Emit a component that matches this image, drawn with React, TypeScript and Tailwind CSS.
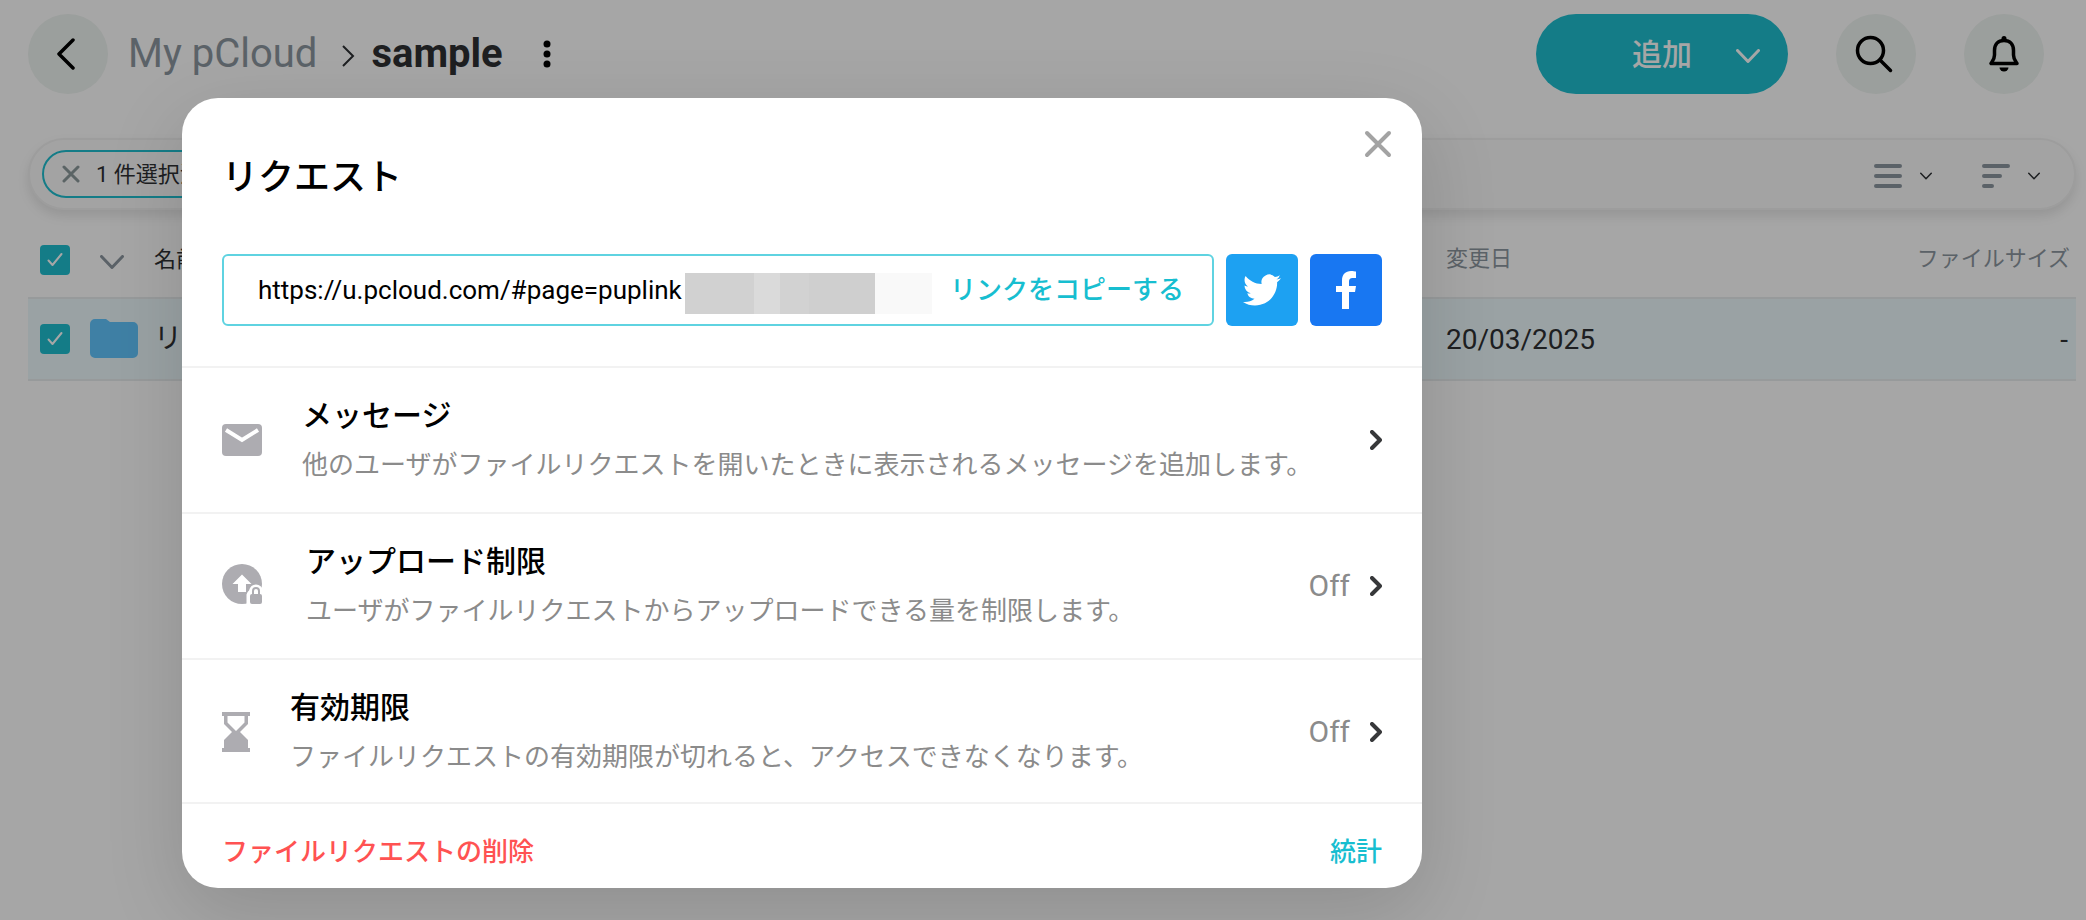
import type { ReactNode } from 'react';

function Checkbox({ label }: { label: string }) {
  return (
    <span className="relative block h-[30px] w-[30px] shrink-0">
      <input
        type="checkbox"
        defaultChecked
        aria-label={label}
        className="block h-[30px] w-[30px] appearance-none rounded bg-[#1fbfd0]"
      />
      <svg className="pointer-events-none absolute inset-0" width="30" height="30" viewBox="0 0 30 30" fill="none" stroke="#fff" strokeWidth="2">
        <path d="M8.5 15.5l4 4.500L21.500 9" strokeLinecap="round" strokeLinejoin="round" />
      </svg>
    </span>
  );
}

function ChevronDown({ className, width = 2 }: { className: string; width?: number }) {
  return (
    <svg className={className} viewBox="0 0 24 14" fill="none" stroke="currentColor" strokeWidth={width} strokeLinecap="round" strokeLinejoin="round">
      <path d="M1.500 1.500L12 12.500L22.500 1.500" />
    </svg>
  );
}

function MailIcon() {
  return (
    <svg width="40" height="32" viewBox="0 0 40 32">
      <rect width="40" height="32" rx="4" fill="#adacb1" />
      <path d="M4 6l16 10L36 6" fill="none" stroke="#fff" strokeWidth="4" />
    </svg>
  );
}

function UploadLimitIcon() {
  return (
    <svg width="44" height="44" viewBox="0 0 44 44">
      <circle cx="20" cy="20" r="20" fill="#adacb1" />
      <path d="M20 10.500L29.500 20H24v8h-8v-8h-5.500z" fill="#fff" />
      <path d="M24.500 42V30.500q1-3 2.500-4 1.500-6 7-6t7.500 6.500V42z" fill="#fff" />
      <rect x="28" y="30" width="12" height="10" rx="2" fill="#adacb1" />
      <path d="M31 31v-4a3 3 0 0 1 6 0v4" fill="none" stroke="#adacb1" strokeWidth="2" />
    </svg>
  );
}

function HourglassIcon() {
  return (
    <svg width="28" height="40" viewBox="0 0 28 40" fill="#adacb1">
      <path d="M0 0h28v4h-2v8l-8 8 8 8v8h2v4H0v-4h2v-8l8-8-8-8V4H0zM5.500 4v6.500L14 19l8.500-8.500V4z" fillRule="evenodd" />
    </svg>
  );
}

interface SettingRowProps {
  icon: ReactNode;
  title: string;
  text: string;
  value?: string;
}

function SettingRow({ icon, title, text, value }: SettingRowProps) {
  return (
    <button type="button" className="flex w-full items-center border-t-2 border-[#f2f2f2] px-10 py-6 text-left last:pb-[22px]">
      <span className="shrink-0">{icon}</span>
      <span className="ml-10 min-w-0 flex-1">
        <span className="block text-[30px] leading-[48px] font-medium text-black">{title}</span>
        <span className="block pt-0.5 text-[26px] leading-[46px] text-[#8b8b8b]">{text}</span>
      </span>
      {value && <span className="mr-5 text-[30px] leading-9 text-[#8b8b8b]">{value}</span>}
      <svg width="12" height="20" viewBox="0 0 12 20" fill="none" stroke="#37383a" strokeWidth="4" strokeLinecap="round" strokeLinejoin="round">
        <path d="M2 2l8 8-8 8" />
      </svg>
    </button>
  );
}

function TopBar() {
  return (
    <header className="flex items-center pt-3.5 pr-[42px] pl-7">
      <button type="button" aria-label="戻る" className="flex h-20 w-20 items-center justify-center rounded-full bg-[#eff4f1]">
        <svg className="mr-1" width="18" height="32" viewBox="0 0 18 32" fill="none" stroke="#000" strokeWidth="3.500" strokeLinecap="round" strokeLinejoin="round">
          <path d="M16 2L2 16l14 14" />
        </svg>
      </button>
      <nav className="ml-5 flex items-center text-[40px] leading-[48px]">
        <a href="#root" className="text-[#8d97a0]">My pCloud</a>
        <svg className="mt-1 mr-4 ml-6" width="14" height="22" viewBox="0 0 14 22" fill="none" stroke="#2e3134" strokeWidth="2">
          <path d="M2 1l10 10L2 21" />
        </svg>
        <a href="#sample" className="font-bold text-[#2e3134]">sample</a>
      </nav>
      <button type="button" aria-label="メニュー" className="ml-10">
        <svg width="8" height="28" viewBox="0 0 8 28">
          <circle cx="4" cy="4" r="3.500" />
          <circle cx="4" cy="14" r="3.500" />
          <circle cx="4" cy="24" r="3.500" />
        </svg>
      </button>
      <div className="ml-auto flex gap-12">
        <button type="button" className="flex h-20 w-[252px] items-center justify-end gap-11 rounded-full bg-[#1fbfd0] pr-7 text-[30px] font-medium text-white">
          追加
          <ChevronDown className="mt-1 h-3.5 w-6" width={3} />
        </button>
        <button type="button" aria-label="検索" className="flex h-20 w-20 items-center justify-center rounded-full bg-[#eff4f1]">
          <svg className="mr-1" width="38" height="38" viewBox="0 0 38 38" fill="none" stroke="#000" strokeWidth="3.500" strokeLinecap="round">
            <circle cx="15.500" cy="15.500" r="13" />
            <path d="M25 25L35.500 35.500" />
          </svg>
        </button>
        <button type="button" aria-label="通知" className="flex h-20 w-20 items-center justify-center rounded-full bg-[#eff4f1]">
          <svg width="32" height="36" viewBox="0 0 32 36" fill="none" stroke="#000" strokeWidth="3.500" strokeLinejoin="round">
            <path d="M16 4.500c-6 0-9.500 4-9.500 10v4.500c0 4-1.500 5.500-3.500 8.500h26c-2-3-3.500-4.500-3.500-8.500v-4.500c0-6-3.500-10-9.500-10z" />
            <circle cx="16" cy="2.500" r="2.500" fill="#000" stroke="none" />
            <path d="M11.500 31.500h9a4.500 4 0 0 1-9 0z" fill="#000" stroke="none" />
          </svg>
        </button>
      </div>
    </header>
  );
}

function SelectionBar() {
  return (
    <div className="mx-7 mt-11 mr-2.5 flex h-[72px] items-center rounded-full border-2 border-[#f1f1f1] bg-[#fbfbfb] pr-[34px] pl-3 shadow-[0_6px_12px_rgba(0,0,0,0.1)]">
      <button type="button" className="flex h-12 items-center gap-4 rounded-full border-2 border-[#1fbfd0] px-[18px] text-[22px] text-[#2e3134]">
        <svg width="18" height="18" viewBox="0 0 18 18" fill="none" stroke="#8d9a9c" strokeWidth="3" strokeLinecap="round">
          <path d="M2 2l14 14M16 2L2 16" />
        </svg>
        1 件選択済み
      </button>
      <div className="ml-auto flex gap-[50px] pt-1 text-[#2e3134]">
        <button type="button" aria-label="表示形式" className="flex items-center gap-[18px]">
          <svg width="28" height="24" viewBox="0 0 28 24" fill="none" stroke="#8d97a0" strokeWidth="4" strokeLinecap="round">
            <path d="M2 2h24M2 12h24M2 22h24" />
          </svg>
          <ChevronDown className="h-2 w-3" width={3} />
        </button>
        <button type="button" aria-label="並べ替え" className="flex items-center gap-[18px]">
          <svg width="28" height="24" viewBox="0 0 28 24" fill="none" stroke="#8d97a0" strokeWidth="4" strokeLinecap="round">
            <path d="M2 2h24M2 12h16M2 22h8" />
          </svg>
          <ChevronDown className="h-2 w-3" width={3} />
        </button>
      </div>
    </div>
  );
}

function FileTable() {
  return (
    <div className="mt-[22px] mr-2.5 ml-7">
      <table className="w-full table-fixed border-collapse text-left text-[#2e3134]">
        <thead>
          <tr className="h-[66px] text-[22px]">
            <th className="w-[1418px] pb-2.5 pl-3 font-normal">
              <div className="flex items-center">
                <Checkbox label="すべて選択" />
                <ChevronDown className="mt-1 mr-[30px] ml-[30px] h-3.5 w-6 text-[#8d97a0]" width={3} />
                名前
              </div>
            </th>
            <th className="pb-3 font-normal text-[#8d97a0]">変更日</th>
            <th className="pr-1.5 pb-3 text-right font-normal text-[#8d97a0]">ファイルサイズ</th>
          </tr>
        </thead>
        <tbody>
          <tr className="h-[82px] border-y-2 border-[#e9edee] bg-[#edf9fc] text-[28px]">
            <td className="pl-3">
              <div className="flex items-center">
                <Checkbox label="リクエスト" />
                <svg className="mr-4 ml-5" width="48" height="40" viewBox="0 0 48 40" fill="#61c5fe">
                  <path d="M5 0h11l4 3h23a5 5 0 0 1 5 5v26a5 5 0 0 1-5 5H5a5 5 0 0 1-5-5V5a5 5 0 0 1 5-5z" />
                </svg>
                リクエスト
              </div>
            </td>
            <td className="pt-0.5">20/03/2025</td>
            <td className="pt-0.5 pr-2 text-right">-</td>
          </tr>
        </tbody>
      </table>
    </div>
  );
}

function RequestDialog() {
  return (
    <section
      role="dialog"
      aria-label="リクエスト"
      className="relative mt-[98px] ml-[182px] w-full max-w-[1240px] self-start rounded-[36px] bg-white shadow-[0_24px_80px_rgba(0,0,0,0.14)]"
    >
      <button type="button" aria-label="閉じる" className="absolute top-8 right-[30px]">
        <svg width="28" height="28" viewBox="0 0 28 28" fill="none" stroke="#a3a3a3" strokeWidth="4" strokeLinecap="round">
          <path d="M3 3l22 22M25 3L3 25" />
        </svg>
      </button>

      <div className="px-10 pt-[54px] pb-10">
        <h1 className="text-[36px] leading-[52px] font-medium text-black">リクエスト</h1>
        <div className="mt-[50px] flex gap-3">
          <div className="relative flex h-[72px] min-w-0 flex-1 items-center rounded-md border-2 border-[#5fd3e1] pr-7 pl-[34px]">
            <input
              type="text"
              readOnly
              aria-label="リンク"
              defaultValue="https://u.pcloud.com/#page=puplink"
              className="min-w-0 flex-1 text-[26px] text-black outline-none"
            />
            {/* masked part of the link */}
            <span className="absolute top-[17px] left-[461px] flex h-[41px]">
              <span className="w-[69px] bg-[#d1d1d1]" />
              <span className="w-[26px] bg-[#dadada]" />
              <span className="w-[29px] bg-[#d2d2d2]" />
              <span className="w-[66px] bg-[#cfcfcf]" />
              <span className="w-[57px] bg-[#f9f9f9]" />
            </span>
            <button type="button" className="text-[26px] font-medium text-[#17bed0]">リンクをコピーする</button>
          </div>
          <a href="#twitter" aria-label="Twitter" className="flex h-[72px] w-[72px] items-center justify-center rounded-md bg-[#1da1f2]">
            <svg width="38" height="38" viewBox="0 0 24 24" fill="#fff">
              <path d="M23.953 4.570a10 10 0 0 1-2.825.775 4.958 4.958 0 0 0 2.163-2.723c-.951.555-2.005.959-3.127 1.184a4.920 4.920 0 0 0-8.384 4.482C7.690 8.095 4.067 6.130 1.640 3.162a4.822 4.822 0 0 0-.666 2.475c0 1.710.870 3.213 2.188 4.096a4.904 4.904 0 0 1-2.228-.616v.060a4.923 4.923 0 0 0 3.946 4.827 4.996 4.996 0 0 1-2.212.085 4.936 4.936 0 0 0 4.604 3.417 9.867 9.867 0 0 1-6.102 2.105c-.390 0-.779-.023-1.170-.067a13.995 13.995 0 0 0 7.557 2.209c9.053 0 13.998-7.496 13.998-13.985 0-.210 0-.420-.015-.630A9.935 9.935 0 0 0 24 4.590z" />
            </svg>
          </a>
          <a href="#facebook" aria-label="Facebook" className="flex h-[72px] w-[72px] items-center justify-center rounded-md bg-[#1877f2]">
            <svg width="22" height="38" viewBox="0 0 22 38" fill="#fff">
              <path d="M7 38V21H1v-6h6v-5.500C7 3.500 10.500 0 16 0c2 0 4 .4 5 .5V7h-3.500C15 7 14 8.500 14 10.500V15h7l-1 6h-6v17z" />
            </svg>
          </a>
        </div>
      </div>

      <div>
        <SettingRow
          icon={<MailIcon />}
          title="メッセージ"
          text="他のユーザがファイルリクエストを開いたときに表示されるメッセージを追加します。"
        />
        <SettingRow
          icon={<UploadLimitIcon />}
          title="アップロード制限"
          text="ユーザがファイルリクエストからアップロードできる量を制限します。"
          value="Off"
        />
        <SettingRow
          icon={<HourglassIcon />}
          title="有効期限"
          text="ファイルリクエストの有効期限が切れると、アクセスできなくなります。"
          value="Off"
        />
      </div>

      <div className="flex justify-between border-t-2 border-[#f2f2f2] px-10 pt-7 pb-4 text-[26px] leading-10 font-medium">
        <button type="button" className="text-[#ff5252]">ファイルリクエストの削除</button>
        <button type="button" className="text-[#17bed0]">統計</button>
      </div>
    </section>
  );
}

export default function App() {
  return (
    <div className="relative min-h-screen overflow-hidden bg-white font-['Roboto','Noto_Sans_CJK_JP',sans-serif]">
      <TopBar />
      <SelectionBar />
      <FileTable />
      <div className="absolute inset-0 flex bg-black/35">
        <RequestDialog />
      </div>
    </div>
  );
}
